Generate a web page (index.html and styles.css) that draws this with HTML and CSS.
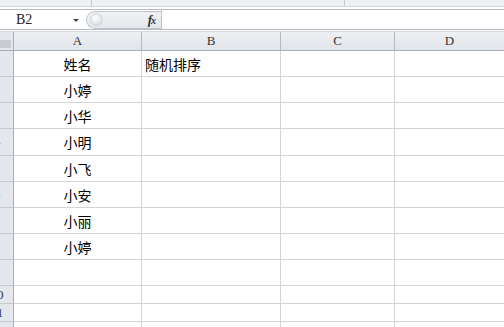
FILE: index.html
```html
<!DOCTYPE html>
<html>
<head>
	<title>Sheet</title>
	<meta charset="utf-8">
	<link rel="stylesheet" href="styles.css">
</head>
<body>
	<div class="window">
		<div class="ribbon-edge">
			<span class="seg seg-a"></span>
			<span class="seg seg-b"></span>
		</div>
		<div class="formula-bar">
			<div class="name-box">
				<span class="cell-ref">B2</span>
				<span class="drop-arrow"></span>
			</div>
			<div class="fx-pill">
				<span class="knob"></span>
				<span class="fx">f<span class="fx-x">x</span></span>
			</div>
			<div class="formula-input"></div>
		</div>
		<div class="sheet">
			<div class="row head-row">
				<div class="rh corner"><span class="tri"></span></div>
				<div class="c ca ch">A</div>
				<div class="c cb ch">B</div>
				<div class="c cc ch">C</div>
				<div class="c cd ch">D</div>
			</div>
			<div class="row"><div class="rh"><span>1</span></div><div class="c ca">姓名</div><div class="c cb left">随机排序</div><div class="c cc"></div><div class="c cd"></div></div>
			<div class="row"><div class="rh"><span>2</span></div><div class="c ca">小婷</div><div class="c cb"></div><div class="c cc"></div><div class="c cd"></div></div>
			<div class="row"><div class="rh"><span>3</span></div><div class="c ca">小华</div><div class="c cb"></div><div class="c cc"></div><div class="c cd"></div></div>
			<div class="row tall"><div class="rh"><span>4</span></div><div class="c ca">小明</div><div class="c cb"></div><div class="c cc"></div><div class="c cd"></div></div>
			<div class="row"><div class="rh"><span>5</span></div><div class="c ca">小飞</div><div class="c cb"></div><div class="c cc"></div><div class="c cd"></div></div>
			<div class="row"><div class="rh"><span>6</span></div><div class="c ca">小安</div><div class="c cb"></div><div class="c cc"></div><div class="c cd"></div></div>
			<div class="row"><div class="rh"><span>7</span></div><div class="c ca">小丽</div><div class="c cb"></div><div class="c cc"></div><div class="c cd"></div></div>
			<div class="row"><div class="rh"><span>8</span></div><div class="c ca">小婷</div><div class="c cb"></div><div class="c cc"></div><div class="c cd"></div></div>
			<div class="row"><div class="rh"><span>9</span></div><div class="c ca"></div><div class="c cb"></div><div class="c cc"></div><div class="c cd"></div></div>
			<div class="row short"><div class="rh"><span>10</span></div><div class="c ca"></div><div class="c cb"></div><div class="c cc"></div><div class="c cd"></div></div>
			<div class="row short"><div class="rh"><span>11</span></div><div class="c ca"></div><div class="c cb"></div><div class="c cc"></div><div class="c cd"></div></div>
			<div class="row short"><div class="rh"><span>12</span></div><div class="c ca"></div><div class="c cb"></div><div class="c cc"></div><div class="c cd"></div></div>
		</div>
		<div class="watermark">
			<span class="wm-s">S</span>
			<span class="wm-text">快懂百科</span>
		</div>
	</div>
</body>
</html>
```
FILE: styles.css
```css
body {
	margin: 0;
	padding: 0;
	background: #fff;
	font-family: "Noto Sans CJK SC", "Liberation Sans", sans-serif;
	overflow: hidden;
}
.window {
	width: 504px;
	height: 327px;
	overflow: hidden;
	position: relative;
	background: #fff;
}
.ribbon-edge {
	height: 6px;
	background: #eef0f3;
	border-bottom: 1px solid #d3d6db;
	display: flex;
}
.seg {
	display: block;
	height: 6px;
	border-right: 1px solid #c8ccd2;
}
.seg-a { width: 91px; }
.seg-b { width: 252px; }

.formula-bar {
	margin-top: 2px;
	height: 19px;
	border-top: 1px solid #b7bbc1;
	border-bottom: 1px solid #b7bbc1;
	display: flex;
	align-items: center;
}
.name-box {
	width: 84px;
	height: 19px;
	display: flex;
	align-items: center;
	background: #fff;
}
.cell-ref {
	font-family: "Liberation Serif", serif;
	font-size: 14px;
	color: #222;
	margin-left: 16px;
	flex: 1;
	line-height: 19px;
}
.drop-arrow {
	width: 0;
	height: 0;
	border-left: 3px solid transparent;
	border-right: 3px solid transparent;
	border-top: 3px solid #444;
	margin-right: 5px;
	margin-top: 2px;
}
.fx-pill {
	width: 74px;
	height: 16px;
	border: 1px solid #c0c4ca;
	border-right: none;
	border-radius: 9px 0 0 9px;
	background: linear-gradient(#f0f2f4, #e3e6ea);
	display: flex;
	align-items: center;
	justify-content: space-between;
	margin-left: 2px;
}
.knob {
	width: 11px;
	height: 11px;
	border-radius: 50%;
	margin-left: 3px;
	background: radial-gradient(circle at 40% 35%, #ffffff 0, #e9ebee 45%, #c9cdd3 100%);
	border: 1px solid #d0d4d9;
}
.fx {
	font-family: "Liberation Serif", serif;
	font-style: italic;
	font-weight: bold;
	font-size: 13px;
	color: #333;
	margin-right: 6px;
	letter-spacing: -1px;
}
.fx-x {
	font-size: 10px;
}
.formula-input {
	flex: 1;
	height: 19px;
	border-left: 1px solid #c0c4ca;
	background: #fff;
}

.sheet {
	margin-top: 1px;
	border-top: 1px solid #d5d8dc;
}
.row {
	display: flex;
	height: 26px;
}
.row.tall { height: 27px; }
.row.short { height: 18px; }
.head-row {
	height: 19px;
}
.rh {
	width: 13px;
	flex: none;
	background: #e4e7eb;
	border-right: 1px solid #a9aeb5;
	border-bottom: 1px solid #c6cacf;
	box-sizing: content-box;
	overflow: hidden;
	font-family: "Liberation Serif", serif;
	font-size: 13px;
	color: #333;
	display: flex;
	align-items: center;
}
.rh span {
	display: block;
	width: 30px;
	flex: none;
	margin-left: -18px;
	text-align: center;
}
.corner {
	position: relative;
	background: #e4e7eb;
	border-bottom: 1px solid #a9aeb5;
}
.tri {
	position: absolute;
	right: 2px;
	bottom: 2px;
	width: 0;
	height: 0;
	border-left: 8px solid transparent;
	border-bottom: 8px solid #c8ccd2;
}
.c {
	flex: none;
	border-right: 1px solid #d4d4d4;
	border-bottom: 1px solid #d4d4d4;
	display: flex;
	align-items: center;
	justify-content: center;
	font-size: 14px;
	color: #000;
	overflow: hidden;
	white-space: nowrap;
}
.c.left {
	justify-content: flex-start;
	padding-left: 3px;
}
.ca { width: 127px; }
.cb { width: 138px; }
.cc { width: 113px; }
.cb.left { width: 135px; }
.cd { flex: 1; border-right: none; }
.ch {
	background: linear-gradient(#eef0f3, #e1e4e9);
	border-right: 1px solid #b4b9c0;
	border-bottom: 1px solid #a9aeb5;
	font-family: "Liberation Serif", serif;
	font-size: 13px;
	color: #333;
}
.ch.cd { border-right: none; }

.watermark {
	position: absolute;
	right: 8px;
	bottom: 26px;
	display: flex;
	align-items: center;
	color: rgba(0, 0, 0, 0.025);
}
.wm-s {
	font-family: "Liberation Sans", sans-serif;
	font-weight: bold;
	font-size: 30px;
	line-height: 30px;
}
.wm-text {
	font-size: 18px;
	margin-left: 2px;
}
```
